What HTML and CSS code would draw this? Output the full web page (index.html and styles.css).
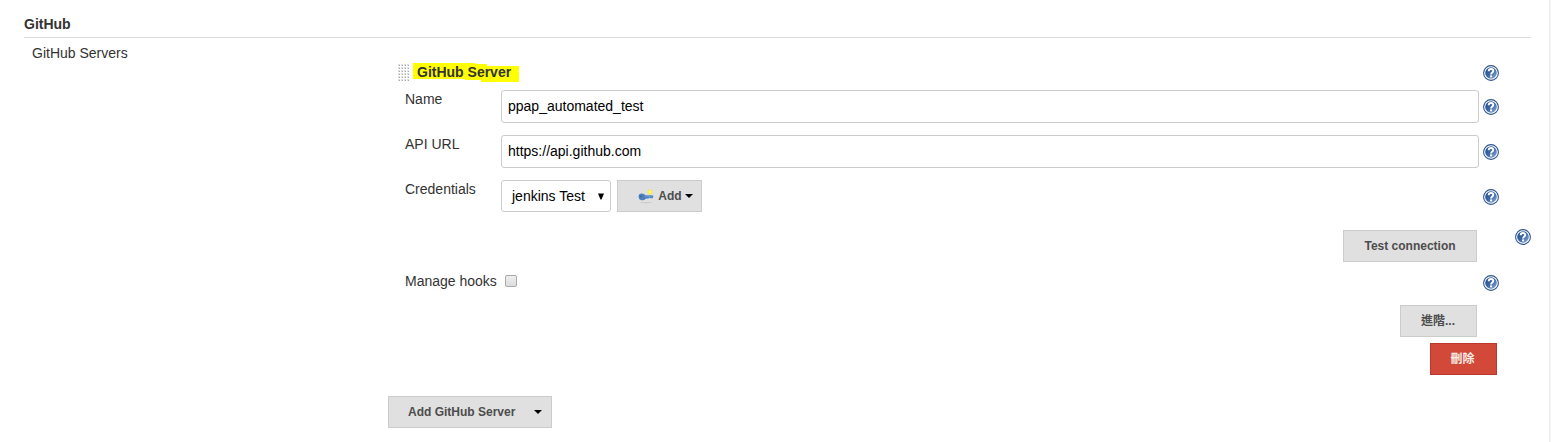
FILE: index.html
```html
<!DOCTYPE html>
<html lang="zh-Hant">
<head>
<meta charset="utf-8">
<title>GitHub</title>
<link rel="stylesheet" href="styles.css">
</head>
<body>
<svg width="0" height="0" class="defs">
  <defs>
    <linearGradient id="blue" x1="0" y1="0" x2="1" y2="1">
      <stop offset="0" stop-color="#1f4a8a"/><stop offset=".5" stop-color="#3d68a8"/><stop offset="1" stop-color="#8fb0da"/>
    </linearGradient>
    <symbol id="help" viewBox="0 0 16 16">
      <circle cx="8" cy="8" r="7.4" fill="#fff" stroke="#2f568f" stroke-width="1.1"/>
      <circle cx="8" cy="8" r="5.8" fill="url(#blue)"/>
      <path d="M5.7 6.2C5.7 4.6 6.7 4 8 4s2.3.8 2.3 2c0 1.6-2.2 1.6-2.2 3.4" fill="none" stroke="#fff" stroke-width="1.9"/>
      <rect x="7.1" y="10.4" width="2" height="2" fill="#fff"/>
    </symbol>
  </defs>
</svg>
<main class="page">
  <h2 class="section-title"><span>GitHub</span></h2>
  <div class="section">
    <div class="section-label"><span>GitHub Servers</span></div>
    <div class="server">
      <div class="row head">
        <svg class="grip" width="12" height="18"><defs><pattern id="dots" width="3" height="3" patternUnits="userSpaceOnUse"><rect width="2" height="2" fill="#dedede"/><rect x="1" y="1" width="1" height="1" fill="#a8a8a8"/></pattern></defs><rect width="12" height="18" fill="url(#dots)"/></svg>
        <div class="marked">
          <svg class="marker" width="106" height="20"><path d="M0 1H60L65 2H74V4H106V20H68V18H52V17H0Z" fill="#ff0"/></svg>
          <b class="server-name">GitHub Server</b>
        </div>
        <svg class="help"><use href="#help"/></svg>
      </div>
      <div class="row field">
        <label><span>Name</span></label>
        <div class="input"><span>ppap_automated_test</span></div>
        <svg class="help"><use href="#help"/></svg>
      </div>
      <div class="row field">
        <label><span>API URL</span></label>
        <div class="input"><span>https://api.github.com</span></div>
        <svg class="help"><use href="#help"/></svg>
      </div>
      <div class="row field cred">
        <label><span>Credentials</span></label>
        <div class="controls">
          <div class="select"><span>jenkins Test</span><svg width="6" height="7"><path d="M0 .5H6L3.5 6.5H2.5Z" fill="#000"/></svg></div>
          <button class="btn add">
            <svg class="key" width="16" height="16" viewBox="0 0 16 16">
              <ellipse cx="8" cy="14.6" rx="6" ry=".7" fill="#ccc"/>
              <circle cx="12" cy="4" r="2.5" fill="#f7ec45"/><circle cx="12" cy="4" r="1" fill="#fffbb0"/>
              <path d="M1 6.4Q3.5 4.6 6.2 6.2L7.5 7.2H14.5L15.5 8.5L14.5 10.2H12.5L11.5 9.6L10.5 10.4H8Q6 12.9 2.8 12.1Q-.4 10.6 1 6.4Z" fill="#4d7fbe"/>
              <path d="M6.5 8.1H14.5" stroke="#83a9d6" stroke-width=".9"/><circle cx="2.8" cy="8.4" r="1" fill="#3969a6"/>
            </svg>
            <span>Add</span>
            <svg class="caret" width="8" height="4"><path d="M0 0H8L4 4Z" fill="#000"/></svg>
          </button>
        </div>
        <svg class="help"><use href="#help"/></svg>
      </div>
      <div class="row test">
        <button class="btn w134"><span>Test connection</span></button>
        <svg class="help"><use href="#help"/></svg>
      </div>
      <div class="row hooks">
        <label><span>Manage hooks</span></label>
        <i class="check"></i>
        <svg class="help"><use href="#help"/></svg>
      </div>
      <div class="row advanced"><button class="btn w77"><span>進階...</span></button></div>
      <div class="row delete"><button class="btn danger"><span>刪除</span></button></div>
      <button class="btn add-server"><span>Add GitHub Server</span><svg class="caret" width="8" height="4"><path d="M0 0H8L4 4Z" fill="#000"/></svg></button>
    </div>
  </div>
</main>
</body>
</html>
```
FILE: styles.css
```css
* { box-sizing: border-box; }
body { margin: 0; background: #fff; color: #333; font: 14px/20px "Liberation Sans", Arial, "Noto Sans CJK TC", sans-serif; }
.defs { display: block; }
.page { width: 1551px; height: 442px; padding: 14px 18px 0 24px; border-right: 2px solid #f0f0f0; overflow: hidden; }
.section-title { margin: 0; height: 24px; font-size: 14px; line-height: 20px; border-bottom: 1px solid #ddd; width: 1507px; }
span, b { white-space: nowrap; }
.section { display: grid; grid-template-columns: 364px 1143px; }
.section-label { padding: 5px 0 0 8px; }
.server { padding-top: 19px; }
.row { display: flex; align-items: flex-start; }
.help { display: block; width: 16px; height: 16px; flex: none; margin-left: auto; }
.head { height: 33px; padding: 7px 32px 0 10px; }
.grip { display: block; }
.marked { display: grid; margin-left: 3px; }
.marked > * { grid-area: 1 / 1; }
.server-name { padding-left: 4px; margin-top: -2px; }
.marker { margin-top: -2px; }
.head .help { margin-top: 1px; }
.field { height: 45px; padding: 0 32px 0 17px; }
.field label { width: 96px; flex: none; margin-top: -1px; }
.input { width: 978px; height: 33px; border: 1px solid #ccc; border-radius: 3px; padding: 5px 6px; color: #000; }
.field .help { margin-top: 9px; }
.cred { height: 50px; }
.controls { display: flex; gap: 6px; }
.select { display: flex; align-items: center; justify-content: space-between; width: 110px; height: 32px; border: 1px solid #ccc; border-radius: 3px; padding: 0 6px 0 10px; color: #000; }
.btn { display: flex; align-items: center; justify-content: center; height: 32px; padding: 0; border: 1px solid #ccc; background: #e0e0e0; color: #4d4d4d; font: bold 12px/16px "Liberation Sans", Arial, "Noto Sans CJK TC", sans-serif; }
.add { width: 85px; padding-left: 12px; }
.key { margin-right: 4px; }
.add .caret { margin-left: 3px; }
.test { height: 45px; padding-left: 955px; }
.test .help { margin-top: -1px; }
.w134 { width: 134px; }
.hooks { height: 30px; padding: 0 32px 0 17px; margin-top: -4px; }
.check { width: 12px; height: 12px; margin: 4px 0 0 8px; border: 1px solid #aaa; border-radius: 2px; background: linear-gradient(#eee, #ddd); }
.hooks .help { margin-top: 4px; }
.advanced { height: 38px; padding-left: 1012px; margin-top: 4px; }
.w77 { width: 77px; padding-right: 1px; }
.delete { height: 53px; padding-left: 1042px; }
.danger { width: 67px; padding-right: 2px; background: #d24939; border-color: #b93a2c; color: #f5eee8; }
.add-server { width: 164px; justify-content: space-between; padding: 0 9px 0 19px; }
```
